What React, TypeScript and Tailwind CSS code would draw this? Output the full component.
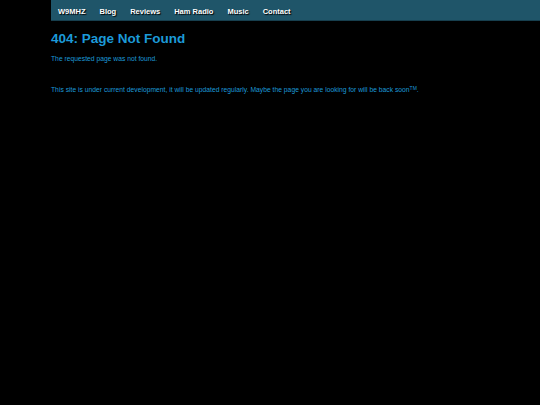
import React from 'react';

const links = ['W9MHZ', 'Blog', 'Reviews', 'Ham Radio', 'Music', 'Contact'];

const App = () => {
  return (
    <div className="min-h-[405px] w-full bg-black font-['Liberation_Sans',Arial,sans-serif]">
      <div className="pl-[51px]">
        <nav className="flex h-[21px] items-center border-b border-[#173f4e] bg-[#1f5569] pt-[3px]">
          {links.map((l) => (
            <a
              key={l}
              href="#"
              className="px-[7px] text-[7.5px] font-bold text-white [text-shadow:1px_1px_1px_#000]"
            >
              {l}
            </a>
          ))}
        </nav>
        <main className="pt-[10px] text-[#1c9ad8]">
          <h1 className="text-[13.5px] font-bold leading-[16px]">404: Page Not Found</h1>
          <p className="mt-[7px] text-[6.75px] leading-[9px]">The requested page was not found.</p>
          <p className="mt-[22px] text-[6.75px] leading-[9px]">
            This site is under current development, it will be updated regularly. Maybe the page you are
            looking for will be back soon<sup className="text-[5px]">TM</sup>.
          </p>
        </main>
      </div>
    </div>
  );
};

export default App;
